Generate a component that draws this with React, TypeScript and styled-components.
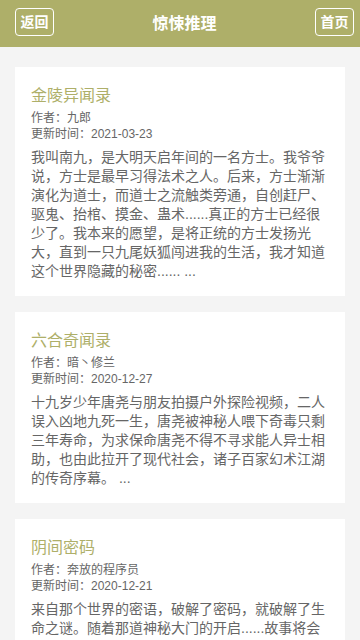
import React from 'react';
import styled, { createGlobalStyle } from "styled-components";

const GlobalStyle = createGlobalStyle`
    html, body {
        margin: 0;
        padding: 0;
        background-color: #f4f4f4;
        font-family: "Liberation Sans", "Noto Sans CJK SC", sans-serif;
    }
`;

const Page = styled.div`
    min-height: 640px;
    background-color: #f4f4f4;
`;

const Header = styled.div`
    display: flex;
    height: 47px;
    padding: 0 6px 0 15px;
    justify-content: space-between;
    align-items: center;
    background-color: #aeaf69;
    box-sizing: border-box;
`;

const HeaderBtn = styled.button`
    width: 39px;
    height: 28px;
    padding: 0;
    margin-top: -3px;
    border: 1px solid #fff;
    border-radius: 4px;
    background: transparent;
    color: #fff;
    font-family: inherit;
    font-size: 14px;
    font-weight: bold;
    line-height: 26px;
`;

const HeaderTitle = styled.h1`
    margin: -3px 0 0;
    color: #fff;
    font-size: 16px;
    font-weight: bold;
`;

const List = styled.div`
    display: flex;
    flex-direction: column;
    gap: 16px;
    padding: 20px 15px;
`;

const Card = styled.div`
    padding: 17px 16px 15px;
    background-color: #fff;
`;

const BookTitle = styled.div`
    color: #aeaf69;
    font-size: 16px;
    line-height: 24px;
`;

const Meta = styled.div`
    margin-top: 2px;
    color: #666;
    font-size: 12px;
    line-height: 16px;
`;

const Desc = styled.p`
    margin: 6px 0 0;
    color: #666;
    font-size: 14px;
    line-height: 19px;
`;

interface Book {
    title: string;
    author: string;
    updated: string;
    desc: string;
}

const books: Book[] = [
    {
        title: "金陵异闻录",
        author: "九郎",
        updated: "2021-03-23",
        desc: "我叫南九，是大明天启年间的一名方士。我爷爷说，方士是最早习得法术之人。后来，方士渐渐演化为道士，而道士之流触类旁通，自创赶尸、驱鬼、抬棺、摸金、蛊术......真正的方士已经很少了。我本来的愿望，是将正统的方士发扬光大，直到一只九尾妖狐闯进我的生活，我才知道这个世界隐藏的秘密...... ...",
    },
    {
        title: "六合奇闻录",
        author: "暗丶修兰",
        updated: "2020-12-27",
        desc: "十九岁少年唐尧与朋友拍摄户外探险视频，二人误入凶地九死一生，唐尧被神秘人喂下奇毒只剩三年寿命，为求保命唐尧不得不寻求能人异士相助，也由此拉开了现代社会，诸子百家幻术江湖的传奇序幕。 ...",
    },
    {
        title: "阴间密码",
        author: "奔放的程序员",
        updated: "2020-12-21",
        desc: "来自那个世界的密语，破解了密码，就破解了生命之谜。随着那道神秘大门的开启......故事将会一步步揭开那些不为人知的秘密。 ...",
    },
];

function App() {
    return (
        <Page>
            <GlobalStyle />
            <Header>
                <HeaderBtn>返回</HeaderBtn>
                <HeaderTitle>惊悚推理</HeaderTitle>
                <HeaderBtn>首页</HeaderBtn>
            </Header>
            <List>
                {books.map((b) => (
                    <Card key={b.title}>
                        <BookTitle>{b.title}</BookTitle>
                        <Meta>
                            作者：{b.author}
                            <br />
                            更新时间：{b.updated}
                        </Meta>
                        <Desc>{b.desc}</Desc>
                    </Card>
                ))}
            </List>
        </Page>
    );
}

export default App;
